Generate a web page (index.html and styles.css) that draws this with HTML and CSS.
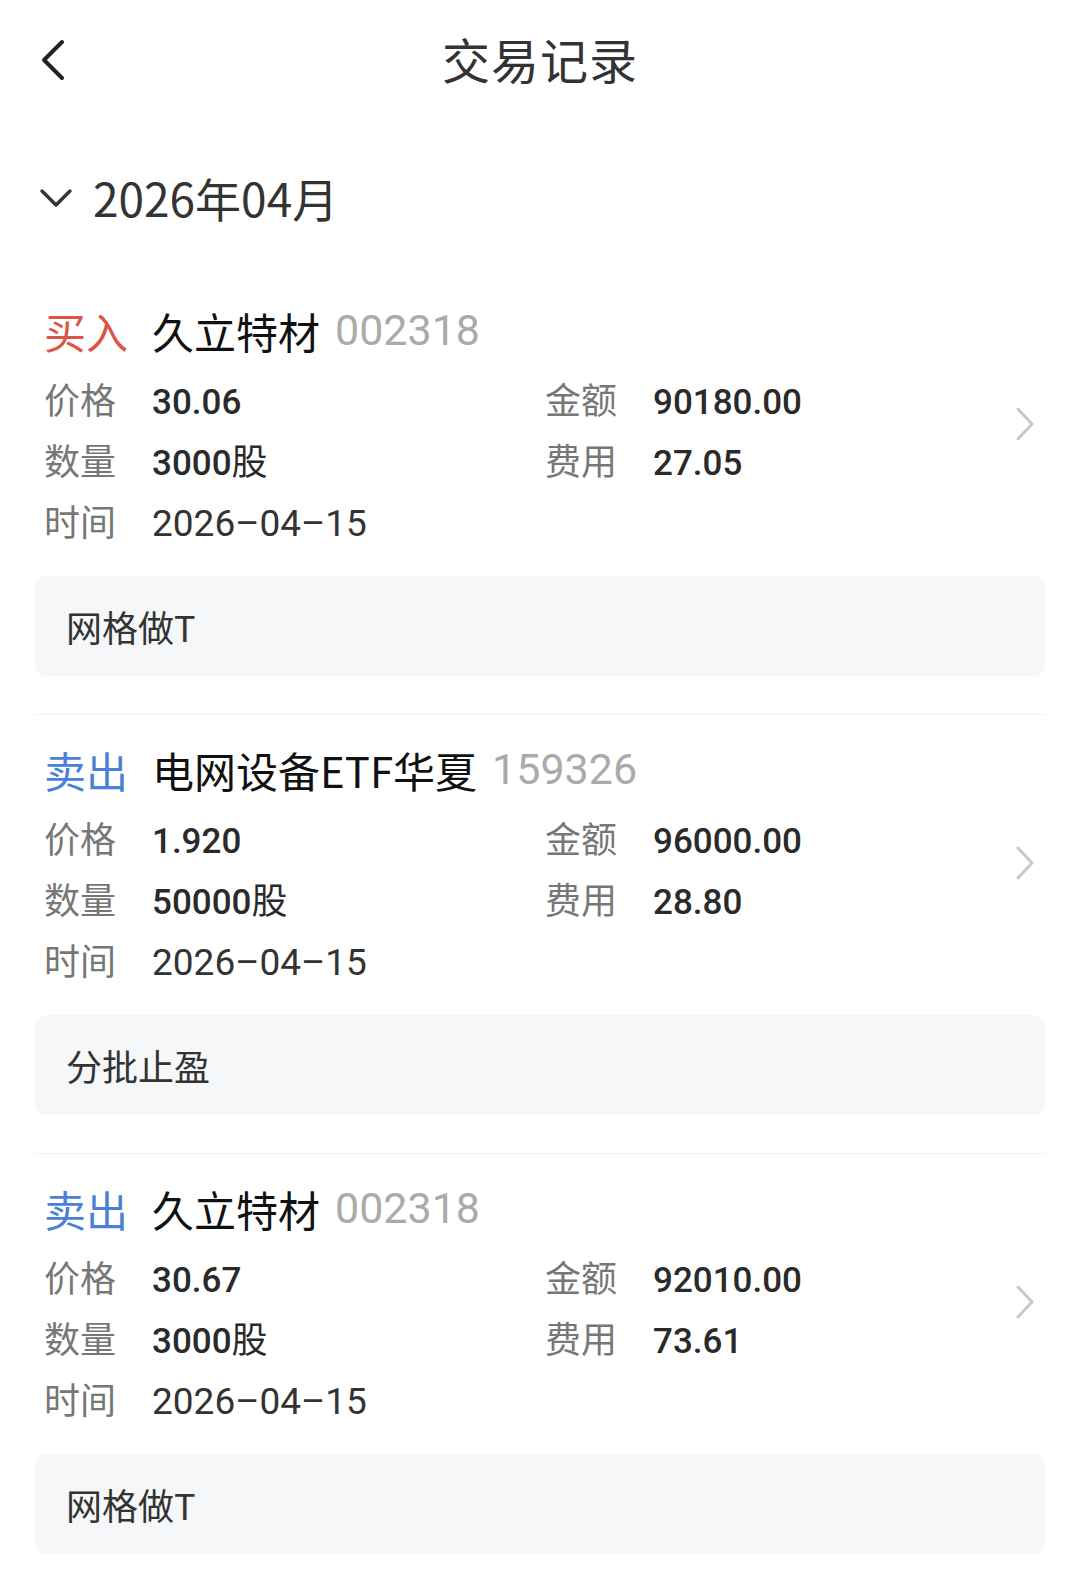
FILE: index.html
```html
<!DOCTYPE html>
<html>
<head lang="zh">
    <meta charset="UTF-8">
    <title>交易记录</title>
    <link rel="stylesheet" href="styles.css">
</head>
<body>
    <!--顶部导航-->
    <div class="nav">
        <span class="back">
            <svg width="28" height="44" viewBox="0 0 28 44"><path d="M24 4 L6 22 L24 40" fill="none" stroke="#222" stroke-width="4" stroke-linecap="round" stroke-linejoin="round"/></svg>
        </span>
        <h1 class="title">交易记录</h1>
        <span class="back-space"></span>
    </div>

    <!--月份-->
    <div class="month">
        <svg width="34" height="20" viewBox="0 0 34 20"><path d="M3 3 L17 17 L31 3" fill="none" stroke="#333" stroke-width="3.4" stroke-linecap="round" stroke-linejoin="round"/></svg>
        <span>2026年04月</span>
    </div>

    <div class="list">
        <!--记录1-->
        <div class="card">
            <div class="head">
                <span class="side buy">买入</span>
                <span class="name">久立特材</span>
                <span class="code">002318</span>
            </div>
            <div class="body">
                <div class="info">
                    <div class="item"><span class="label">价格</span><span class="num">30.06</span></div>
                    <div class="item"><span class="label">金额</span><span class="num">90180.00</span></div>
                    <div class="item"><span class="label">数量</span><span class="num">3000<i>股</i></span></div>
                    <div class="item"><span class="label">费用</span><span class="num">27.05</span></div>
                    <div class="item"><span class="label">时间</span><span class="date">2026–04–15</span></div>
                </div>
                <span class="more">
                    <svg width="22" height="36" viewBox="0 0 22 36"><path d="M4 3 L18 18 L4 33" fill="none" stroke="#c8c8c8" stroke-width="3" stroke-linecap="round" stroke-linejoin="round"/></svg>
                </span>
            </div>
            <div class="note">网格做T</div>
        </div>

        <!--记录2-->
        <div class="card">
            <div class="head">
                <span class="side sell">卖出</span>
                <span class="name">电网设备ETF华夏</span>
                <span class="code">159326</span>
            </div>
            <div class="body">
                <div class="info">
                    <div class="item"><span class="label">价格</span><span class="num">1.920</span></div>
                    <div class="item"><span class="label">金额</span><span class="num">96000.00</span></div>
                    <div class="item"><span class="label">数量</span><span class="num">50000<i>股</i></span></div>
                    <div class="item"><span class="label">费用</span><span class="num">28.80</span></div>
                    <div class="item"><span class="label">时间</span><span class="date">2026–04–15</span></div>
                </div>
                <span class="more">
                    <svg width="22" height="36" viewBox="0 0 22 36"><path d="M4 3 L18 18 L4 33" fill="none" stroke="#c8c8c8" stroke-width="3" stroke-linecap="round" stroke-linejoin="round"/></svg>
                </span>
            </div>
            <div class="note">分批止盈</div>
        </div>

        <!--记录3-->
        <div class="card">
            <div class="head">
                <span class="side sell">卖出</span>
                <span class="name">久立特材</span>
                <span class="code">002318</span>
            </div>
            <div class="body">
                <div class="info">
                    <div class="item"><span class="label">价格</span><span class="num">30.67</span></div>
                    <div class="item"><span class="label">金额</span><span class="num">92010.00</span></div>
                    <div class="item"><span class="label">数量</span><span class="num">3000<i>股</i></span></div>
                    <div class="item"><span class="label">费用</span><span class="num">73.61</span></div>
                    <div class="item"><span class="label">时间</span><span class="date">2026–04–15</span></div>
                </div>
                <span class="more">
                    <svg width="22" height="36" viewBox="0 0 22 36"><path d="M4 3 L18 18 L4 33" fill="none" stroke="#c8c8c8" stroke-width="3" stroke-linecap="round" stroke-linejoin="round"/></svg>
                </span>
            </div>
            <div class="note">网格做T</div>
        </div>
    </div>
</body>
</html>
```

FILE: styles.css
```css
* {
    padding: 0;
    margin: 0;
    box-sizing: border-box;
}

body {
    background: #fff;
    color: #222;
    font-family: "Noto Sans CJK SC", "Noto Sans", sans-serif;
}

.nav {
    height: 120px;
    display: grid;
    grid-template-columns: 120px 1fr 120px;
    align-items: center;
}

.back {
    display: flex;
    padding-left: 38px;
}

.title {
    margin-top: -5px;
    text-align: center;
    font-size: 48px;
    font-weight: 400;
    color: #333;
    letter-spacing: 1px;
}

.month {
    height: 154px;
    display: flex;
    align-items: center;
    gap: 20px;
    padding-left: 39px;
    font-size: 46px;
    color: #333;
}

.month svg {
    margin-top: 2px;
}

.list {
    padding: 0 35px;
}

.card {
    padding-top: 16px;
    padding-bottom: 38px;
    border-bottom: 1px solid #f0f1f3;
}

.card:first-child {
    padding-top: 18px;
}

.card:last-child {
    border-bottom: 0;
}

.head {
    height: 76px;
    display: flex;
    align-items: center;
    padding-left: 9px;
    font-size: 42px;
}

.side {
    margin-right: 24px;
}

.buy {
    color: #dd5546;
}

.sell {
    color: #4b7fd8;
}

.name {
    color: #111;
}

.code {
    margin-left: 15px;
    font-family: Roboto, "Noto Sans", sans-serif;
    font-size: 43px;
    color: #aaa;
}

.body {
    display: flex;
    padding-left: 9px;
}

.info {
    flex: 1;
    display: grid;
    grid-template-columns: 501px 1fr;
    grid-auto-rows: 61px;
}

.item {
    line-height: 61px;
    white-space: nowrap;
}

.label {
    display: inline-block;
    width: 108px;
    font-size: 36px;
    color: #777;
}

.num {
    font-family: Roboto, "Noto Sans CJK SC", sans-serif;
    font-size: 35px;
    font-weight: 500;
    color: #2a2a2a;
}

.num i {
    font-style: normal;
    font-family: "Noto Sans CJK SC", sans-serif;
    font-weight: 400;
    font-size: 36px;
}

.date {
    font-family: Roboto, "Noto Sans", sans-serif;
    font-size: 37px;
    color: #333;
}

.more {
    display: flex;
    margin: 38px 9px 0 0;
    height: 36px;
}

.note {
    margin-top: 25px;
    height: 100px;
    display: flex;
    align-items: center;
    padding-left: 31px;
    background: #f6f7f9;
    border-radius: 12px;
    font-size: 36px;
    color: #333;
}
```
